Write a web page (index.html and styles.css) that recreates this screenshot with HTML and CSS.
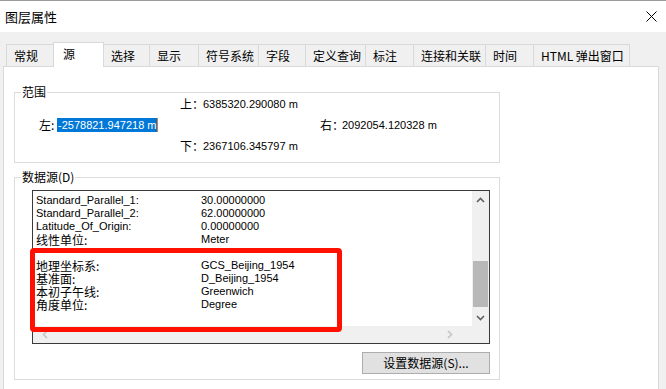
FILE: index.html
```html
<!DOCTYPE html>
<html lang="zh-CN">
<head>
<meta charset="utf-8">
<title>图层属性</title>
<link rel="stylesheet" href="styles.css">
</head>
<body>
<div class="window">
  <div class="titlebar">
    <span class="title">图层属性</span>
    <svg class="close" width="11" height="11" viewBox="0 0 11 11"><path d="M0.5 0.5 L10.5 10.5 M10.5 0.5 L0.5 10.5" stroke="#000" stroke-width="1" fill="none"/></svg>
  </div>
  <div class="tabs">
    <div class="tab w47">常规</div>
    <div class="tab sel">源</div>
    <div class="tab w46">选择</div>
    <div class="tab w49">显示</div>
    <div class="tab w60">符号系统</div>
    <div class="tab w47">字段</div>
    <div class="tab w60">定义查询</div>
    <div class="tab w48">标注</div>
    <div class="tab w72">连接和关联</div>
    <div class="tab w48">时间</div>
    <div class="tab last">HTML 弹出窗口</div>
  </div>
  <div class="panel">
    <fieldset class="group extent">
      <legend>范围</legend>
      <div class="ext-rows">
        <div class="ext-row center"><span class="k">上：</span><span class="v">6385320.290080 m</span></div>
        <div class="ext-row sides">
          <div class="pair leftpair"><span class="k">左:</span><span class="v sel-text">-2578821.947218 m</span><span class="caret"></span></div>
          <div class="pair"><span class="k">右：</span><span class="v">2092054.120328 m</span></div>
        </div>
        <div class="ext-row center"><span class="k">下：</span><span class="v">2367106.345797 m</span></div>
      </div>
    </fieldset>
    <fieldset class="group source">
      <legend>数据源(D)</legend>
      <div class="source-body">
        <div class="listbox">
          <div class="list-content">
            <div class="row"><span>Standard_Parallel_1:</span><span>30.00000000</span></div>
            <div class="row"><span>Standard_Parallel_2:</span><span>62.00000000</span></div>
            <div class="row"><span>Latitude_Of_Origin:</span><span>0.00000000</span></div>
            <div class="row"><span class="cn">线性单位:</span><span>Meter</span></div>
            <div class="row blank"></div>
            <div class="row"><span class="cn">地理坐标系:</span><span>GCS_Beijing_1954</span></div>
            <div class="row"><span class="cn">基准面:</span><span>D_Beijing_1954</span></div>
            <div class="row"><span class="cn">本初子午线:</span><span>Greenwich</span></div>
            <div class="row"><span class="cn">角度单位:</span><span>Degree</span></div>
          </div>
          <div class="vscroll">
            <div class="sbtn"><svg width="9" height="6" viewBox="0 0 9 6"><path d="M1 5 L4.5 1.5 L8 5" stroke="#606060" stroke-width="1.6" fill="none"/></svg></div>
            <div class="track"><div class="thumb"></div></div>
            <div class="sbtn"><svg width="9" height="6" viewBox="0 0 9 6"><path d="M1 1 L4.5 4.5 L8 1" stroke="#606060" stroke-width="1.6" fill="none"/></svg></div>
          </div>
          <div class="hscroll">
            <div class="sbtn"><svg width="6" height="9" viewBox="0 0 6 9"><path d="M5 1 L1.5 4.5 L5 8" stroke="#c4c4c4" stroke-width="1.6" fill="none"/></svg></div>
            <div class="sbtn"><svg width="6" height="9" viewBox="0 0 6 9"><path d="M1 1 L4.5 4.5 L1 8" stroke="#c4c4c4" stroke-width="1.6" fill="none"/></svg></div>
          </div>
          <div class="corner"></div>
          <div class="highlight-box"></div>
        </div>
        <div class="btn-row"><button class="btn">设置数据源(S)...</button></div>
      </div>
    </fieldset>
  </div>
</div>
</body>
</html>
```

FILE: styles.css
```css
* { box-sizing: border-box; }
html, body { margin: 0; padding: 0; }
body {
  width: 666px;
  height: 389px;
  overflow: hidden;
  background: #f0f0f0;
  font-family: "Noto Sans CJK SC", "Liberation Sans", sans-serif;
  font-size: 12px;
  color: #000;
}
.window { width: 666px; height: 389px; }
.titlebar {
  height: 32px;
  background: #fff;
  border-top: 1px solid #9a9a9a;
  display: flex;
  align-items: center;
  justify-content: space-between;
  padding: 0 9px 0 5px;
}
.title { font-size: 13px; line-height: 16px; }
.close { display: block; }

.tabs {
  display: flex;
  align-items: flex-end;
  height: 24px;
  margin-top: 10px;
  margin-left: 6px;
  position: relative;
  z-index: 2;
}
.tab {
  flex: none;
  height: 22px;
  line-height: 21px;
  padding: 0 0 0 7px;
  border: 1px solid #d9d9d9;
  border-right: none;
  border-bottom: none;
  background: #f0f0f0;
  white-space: nowrap;
  overflow: hidden;
}
.tab.w46 { width: 46px; }
.tab.w47 { width: 47px; }
.tab.w48 { width: 48px; }
.tab.w49 { width: 49px; }
.tab.w60 { width: 60px; }
.tab.w72 { width: 72px; }
.tab.last { border-right: 1px solid #d9d9d9; width: 97px; }
.tab.sel {
  width: 51px;
  height: 25px;
  line-height: 21px;
  background: #fff;
  margin-bottom: -1px;
  border-right: 1px solid #d9d9d9;
  margin-right: -1px;
  position: relative;
  z-index: 3;
  padding-left: 9px;
}

.panel {
  margin-left: 3px;
  width: 656px;
  height: 340px;
  background: #fff;
  border: 1px solid #d9d9d9;
  position: relative;
  z-index: 1;
}

.group {
  margin: 0 0 0 10px;
  width: 486px;
  border: 1px solid #dcdcdc;
  padding: 0;
  min-width: 0;
}
.group legend {
  font-size: 12px;
  line-height: 12px;
  padding: 0 1px;
  margin-left: 6px;
}
.extent { margin-top: 19px; height: 77px; }
.source { margin-top: 8px; height: 209px; }
.source-body { padding-left: 17px; }

.ext-rows { margin-top: -5px; }
.ext-row {
  height: 21px;
  display: flex;
  align-items: center;
  font-family: "Liberation Sans", "Noto Sans CJK SC", sans-serif;
  font-size: 11px;
}
.ext-row .k { font-family: "Noto Sans CJK SC", sans-serif; font-size: 12px; }
.ext-row.center { padding-left: 165px; }
.ext-row.center .k { width: 23px; }
.ext-row.sides { padding-left: 24px; }
.pair { display: flex; align-items: center; }
.leftpair { width: 281px; }
.leftpair .k { width: 18px; }
.sides .pair:last-child .k { width: 22px; }
.sel-text {
  background: #0078d7;
  color: #fff;
  height: 14px;
  line-height: 14px;
  padding: 0 1px;
}
.caret { width: 1px; height: 14px; background: #e07a1f; }

.listbox {
  margin-top: 7px;
  width: 458px;
  height: 154px;
  border: 1px solid #3a3a3a;
  display: grid;
  grid-template-columns: 439px 17px;
  grid-template-rows: 135px 17px;
  position: relative;
}
.list-content {
  padding: 3px 0 0 3px;
  overflow: hidden;
  font-family: "Liberation Sans", "Noto Sans CJK SC", sans-serif;
  font-size: 11px;
  line-height: 13px;
}
.row { display: grid; grid-template-columns: 165px 1fr; height: 13px; white-space: nowrap; }
.row .cn { font-family: "Noto Sans CJK SC", sans-serif; font-size: 12px; line-height: 13px; }
.vscroll {
  background: #f0f0f0;
  display: flex;
  flex-direction: column;
}
.sbtn {
  width: 17px;
  height: 17px;
  display: flex;
  align-items: center;
  justify-content: center;
}
.track { flex: 1; padding: 53px 1px 0 1px; }
.thumb { height: 46px; background: #b8b8b8; }
.hscroll {
  background: #f0f0f0;
  display: flex;
  justify-content: space-between;
  padding: 0 14px 0 3px;
}
.corner { background: #f0f0f0; }
.highlight-box {
  position: absolute;
  left: -3px;
  top: 57px;
  width: 312px;
  height: 84px;
  border: 5px solid #ff1000;
  border-radius: 4px;
  pointer-events: none;
}
.btn-row { width: 458px; display: flex; justify-content: flex-end; margin-top: 8px; }
.btn {
  width: 128px;
  height: 22px;
  background: #e1e1e1;
  border: 1px solid #adadad;
  font-family: "Noto Sans CJK SC", sans-serif;
  font-size: 12px;
  line-height: 18px;
  padding: 0;
  color: #000;
}
```
